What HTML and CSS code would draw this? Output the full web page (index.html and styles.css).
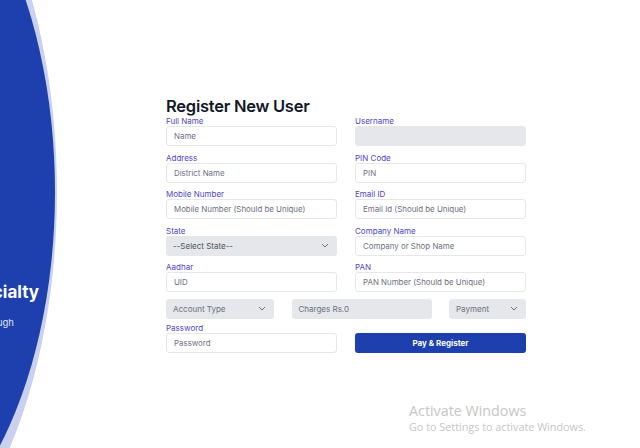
FILE: index.html
```html
<!DOCTYPE html>
<html lang="en">
<head>
<meta charset="utf-8">
<title>Register New User</title>
<link rel="stylesheet" href="styles.css">
</head>
<body>
<div class="page">
  <aside class="hero">
    <svg class="hero-bg" width="166" height="448" viewBox="0 0 166 448" aria-hidden="true">
      <ellipse cx="-145" cy="192" rx="202" ry="398" fill="#c9d1ee"/>
      <ellipse cx="-145" cy="192" rx="200" ry="368" fill="#1e40af"/>
    </svg>
    <div class="hero-text">
      <div class="hero-title">Multispecialty</div>
      <div class="hero-sub">Quality care through</div>
    </div>
  </aside>

  <main class="main">
    <h1 class="title">Register New User</h1>
    <form class="form">
      <div class="field">
        <label class="label">Full Name</label>
        <input class="input" type="text" placeholder="Name">
      </div>
      <div class="field">
        <label class="label">Username</label>
        <input class="input input-disabled" type="text" disabled>
      </div>

      <div class="field">
        <label class="label">Address</label>
        <input class="input" type="text" placeholder="District Name">
      </div>
      <div class="field">
        <label class="label">PIN Code</label>
        <input class="input" type="text" placeholder="PIN">
      </div>

      <div class="field">
        <label class="label">Mobile Number</label>
        <input class="input" type="text" placeholder="Mobile Number (Should be Unique)">
      </div>
      <div class="field">
        <label class="label">Email ID</label>
        <input class="input" type="text" placeholder="Email Id (Should be Unique)">
      </div>

      <div class="field">
        <label class="label">State</label>
        <div class="select">
          <span class="select-text dark">--Select State--</span>
          <svg class="chev" width="8" height="5" viewBox="0 0 8 5"><path d="M1 1l3 3 3-3" fill="none" stroke="#6b7280" stroke-width="1"/></svg>
        </div>
      </div>
      <div class="field">
        <label class="label">Company Name</label>
        <input class="input" type="text" placeholder="Company or Shop Name">
      </div>

      <div class="field">
        <label class="label">Aadhar</label>
        <input class="input" type="text" placeholder="UID">
      </div>
      <div class="field">
        <label class="label">PAN</label>
        <input class="input" type="text" placeholder="PAN Number (Should be Unique)">
      </div>

      <div class="triple">
        <div class="select">
          <span class="select-text">Account Type</span>
          <svg class="chev" width="8" height="5" viewBox="0 0 8 5"><path d="M1 1l3 3 3-3" fill="none" stroke="#6b7280" stroke-width="1"/></svg>
        </div>
        <div class="select">
          <span class="select-text">Charges Rs.0</span>
        </div>
        <div class="select">
          <span class="select-text">Payment</span>
          <svg class="chev" width="8" height="5" viewBox="0 0 8 5"><path d="M1 1l3 3 3-3" fill="none" stroke="#6b7280" stroke-width="1"/></svg>
        </div>
      </div>

      <div class="field">
        <label class="label">Password</label>
        <input class="input" type="password" placeholder="Password">
      </div>
      <div class="field field-end">
        <button class="btn" type="button">Pay &amp; Register</button>
      </div>
    </form>
  </main>

  <div class="watermark">
    <div class="wm-title">Activate Windows</div>
    <div class="wm-sub">Go to Settings to activate Windows.</div>
  </div>
</div>
</body>
</html>
```

FILE: styles.css
```css
* { box-sizing: border-box; }

html, body {
  margin: 0;
  padding: 0;
  background: #ffffff;
}

body {
  width: 640px;
  height: 448px;
  overflow: hidden;
  font-family: Inter, "Liberation Sans", sans-serif;
}

.page {
  position: relative;
  width: 640px;
  height: 448px;
  display: flex;
}

.hero {
  position: relative;
  width: 166px;
  flex: 0 0 166px;
  height: 448px;
}

.hero-bg {
  position: absolute;
  left: 0;
  top: 0;
}

.hero-text {
  position: relative;
  display: flex;
  flex-direction: column;
  padding-top: 282px;
  color: #ffffff;
  white-space: nowrap;
}

.hero-title {
  display: flex;
  justify-content: flex-end;
  width: 39px;
  font-size: 17px;
  line-height: 20px;
  font-weight: 700;
}

.hero-sub {
  display: flex;
  justify-content: flex-end;
  width: 14px;
  margin-top: 15px;
  font-size: 9.5px;
  line-height: 12px;
  color: #dce3f6;
}

.main {
  width: 360px;
  padding-top: 96px;
}

.title {
  margin: 0;
  font-size: 16.5px;
  line-height: 20px;
  font-weight: 600;
  color: #111827;
  letter-spacing: -0.25px;
}

.form {
  display: grid;
  grid-template-columns: 171px 171px;
  column-gap: 18px;
  row-gap: 6.5px;
}

.field {
  display: flex;
  flex-direction: column;
}

.field-end {
  justify-content: flex-end;
}

.label {
  font-size: 8px;
  line-height: 10px;
  color: #4f46c8;
}

.input {
  height: 20px;
  margin: 0;
  padding: 0 7px;
  border: 1px solid #e5e7eb;
  border-radius: 3px;
  background: #ffffff;
  font-family: Inter, "Liberation Sans", sans-serif;
  font-size: 7.9px;
  color: #374151;
  outline: none;
}

.input::placeholder {
  color: #6b7280;
}

.input-disabled {
  background: #e5e7eb;
  border-color: #e5e7eb;
}

.select {
  display: flex;
  align-items: center;
  justify-content: space-between;
  height: 20px;
  padding: 0 8px 0 7px;
  border-radius: 3px;
  background: #e5e7eb;
  font-size: 8px;
  color: #6b7280;
  white-space: nowrap;
}

.select-text.dark {
  color: #4b5563;
}

.chev {
  flex: 0 0 auto;
}

.triple {
  grid-column: 1 / -1;
  display: grid;
  grid-template-columns: 108px 140px 77px;
  column-gap: 17.5px;
  margin-bottom: -2.5px;
}

.btn {
  height: 19.5px;
  margin: 0;
  padding: 0;
  border: none;
  border-radius: 3px;
  background: #1e40af;
  color: #ffffff;
  font-family: Inter, "Liberation Sans", sans-serif;
  font-size: 8px;
  font-weight: 700;
}

.watermark {
  position: absolute;
  left: 409px;
  top: 402px;
  font-family: "Open Sans", "Noto Sans", sans-serif;
  color: #c6c6c6;
  white-space: nowrap;
}

.wm-title {
  font-size: 14.3px;
  line-height: 18px;
}

.wm-sub {
  font-size: 10.8px;
  line-height: 14px;
}
```
